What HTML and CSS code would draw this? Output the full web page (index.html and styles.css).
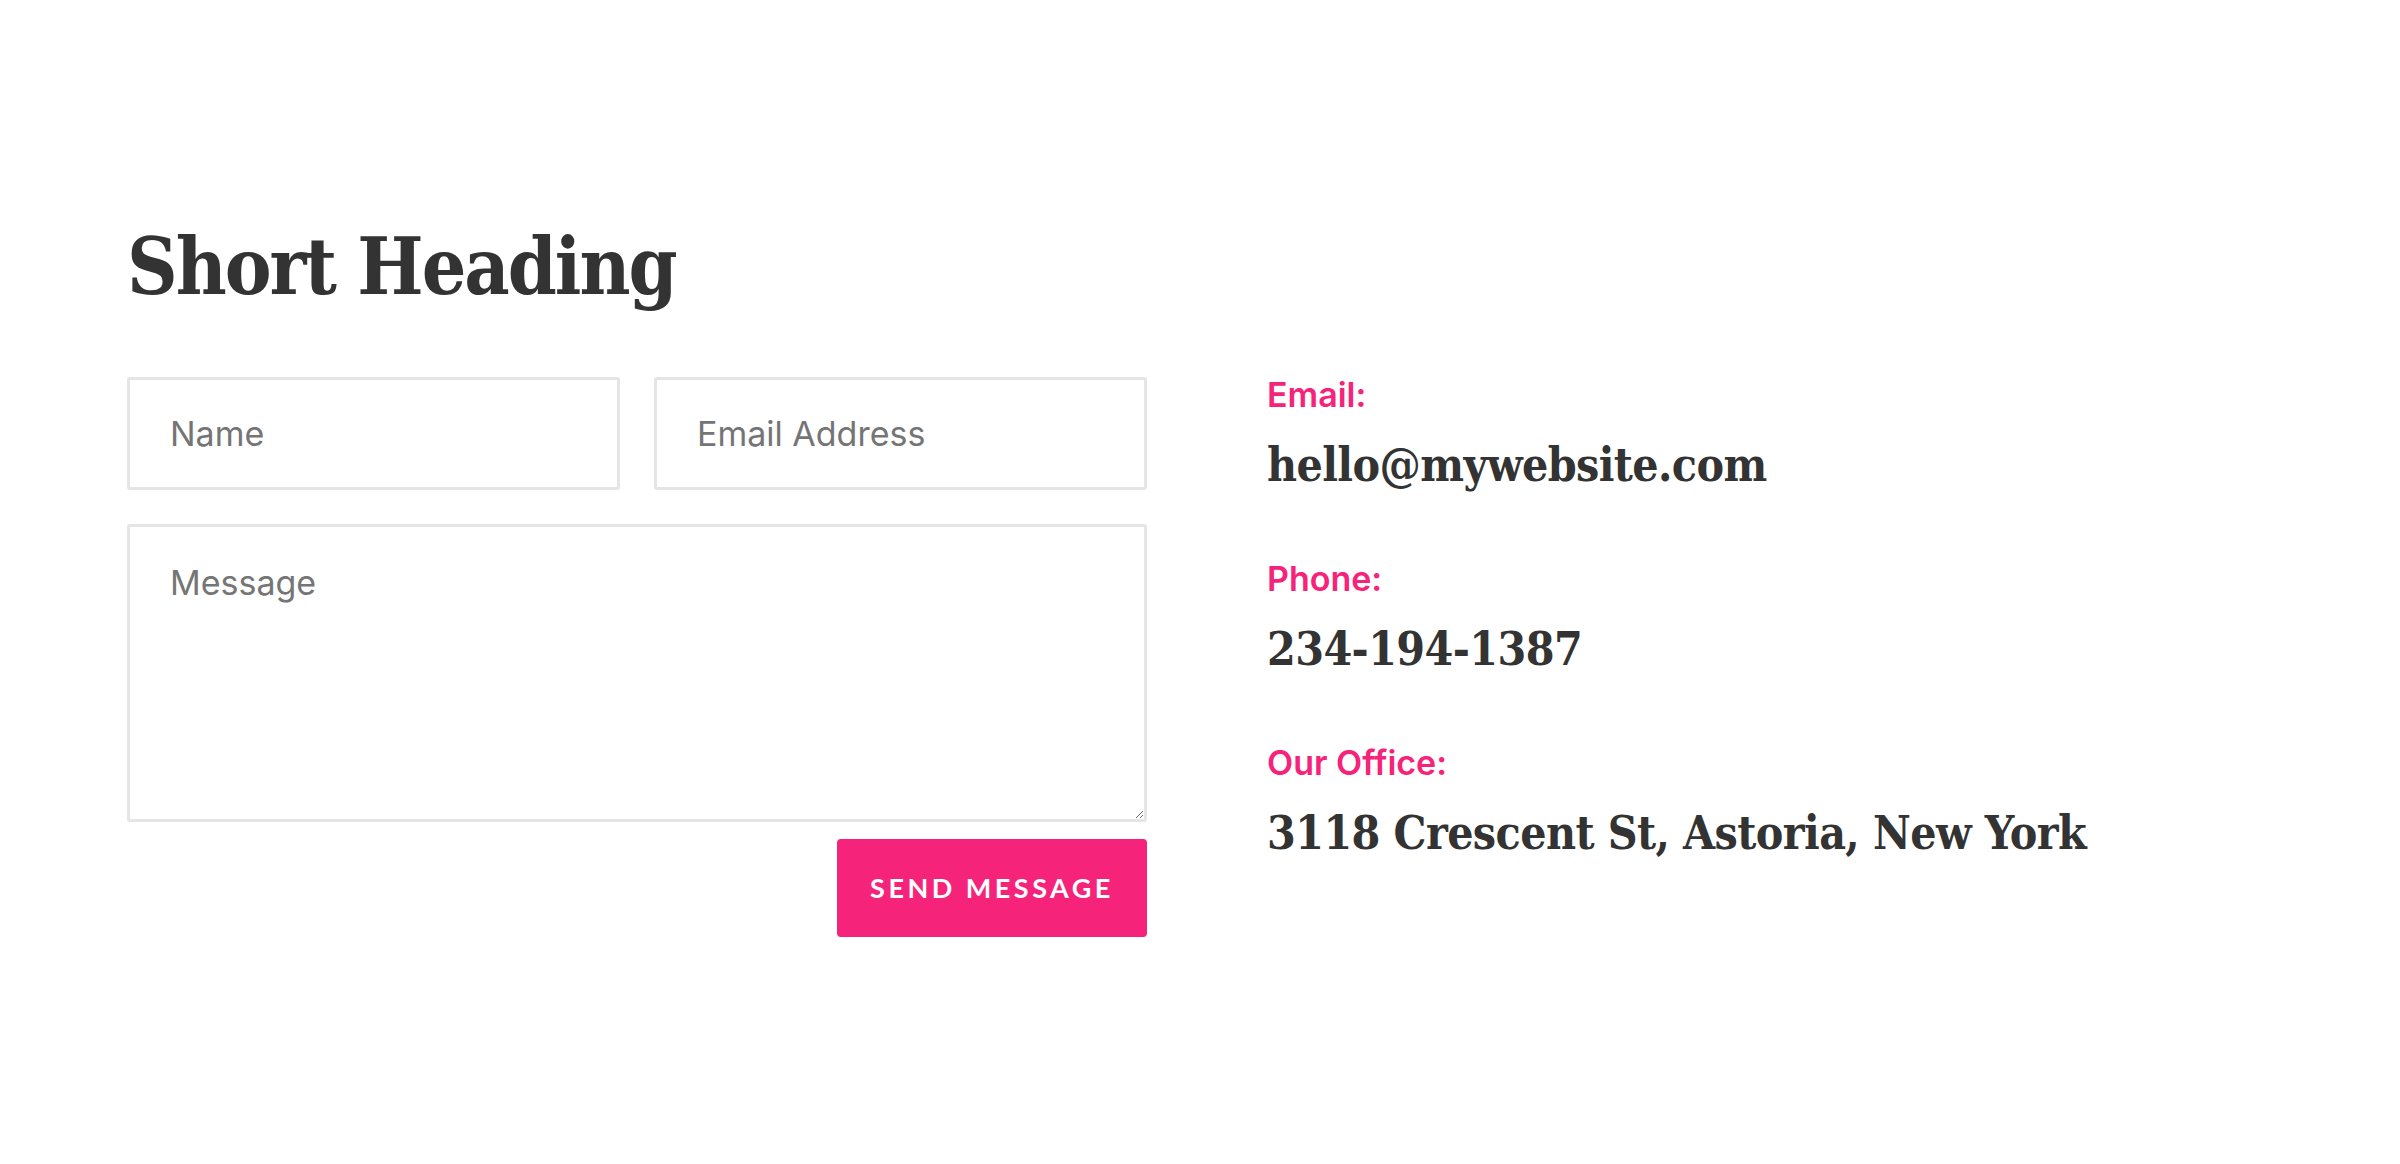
FILE: index.html
```html
<!DOCTYPE html>
<html lang="en">
<head>
<meta charset="utf-8">
<title>Contact</title>
<link rel="stylesheet" href="styles.css">
</head>
<body>
<section class="contact">
  <h2 class="heading">Short Heading</h2>
  <div class="columns">
    <form class="form">
      <div class="row">
        <input class="field" type="text" placeholder="Name">
        <input class="field" type="email" placeholder="Email Address">
      </div>
      <textarea class="field area" placeholder="Message"></textarea>
      <div class="actions">
        <button class="send" type="button">Send Message</button>
      </div>
    </form>
    <div class="info">
      <div class="item">
        <div class="label">Email:</div>
        <div class="value">hello@mywebsite.com</div>
      </div>
      <div class="item">
        <div class="label">Phone:</div>
        <div class="value">234-194-1387</div>
      </div>
      <div class="item">
        <div class="label">Our Office:</div>
        <div class="value">3118 Crescent St, Astoria, New York</div>
      </div>
    </div>
  </div>
</section>
</body>
</html>
```
FILE: styles.css
```css
html, body {
  margin: 0;
  padding: 0;
  background: #ffffff;
}

body {
  font-family: "Inter", "Lato", sans-serif;
  color: #333333;
}

.contact {
  padding: 220px 127px 0 127px;
}

.heading {
  margin: 0 0 63px 0;
  font-family: "DejaVu Serif Condensed", "DejaVu Serif", serif;
  font-stretch: condensed;
  font-weight: 700;
  font-size: 78px;
  line-height: 1.2;
  letter-spacing: -2px;
  color: #333333;
}

.columns {
  display: grid;
  grid-template-columns: 1020px 1fr;
  column-gap: 120px;
}

.form {
  display: flex;
  flex-direction: column;
  gap: 34px;
}

.row {
  display: grid;
  grid-template-columns: 1fr 1fr;
  gap: 34px;
}

.field {
  box-sizing: border-box;
  width: 100%;
  height: 113px;
  margin: 0;
  padding: 0 40px;
  border: 3px solid #e5e5e5;
  border-radius: 3px;
  background: #ffffff;
  font-family: "Inter", "Lato", sans-serif;
  font-size: 34px;
  color: #333333;
  outline: none;
}

.field::placeholder {
  color: #757575;
  opacity: 1;
}

.area {
  height: 298px;
  padding-top: 35px;
  resize: vertical;
  display: block;
}

.actions {
  display: flex;
  justify-content: flex-end;
  margin-top: -17px;
}

.send {
  width: 310px;
  height: 98px;
  border: none;
  border-radius: 4px;
  background: #f5237a;
  color: #ffffff;
  font-family: "Lato", "Inter", sans-serif;
  font-weight: 700;
  font-size: 27px;
  letter-spacing: 3.5px;
  text-transform: uppercase;
  cursor: pointer;
}

.info {
  display: flex;
  flex-direction: column;
  gap: 68px;
}

.label {
  font-family: "Inter", "Lato", sans-serif;
  font-weight: 600;
  font-size: 34px;
  line-height: 36px;
  color: #f5237a;
}

.value {
  margin-top: 24px;
  font-family: "DejaVu Serif Condensed", "DejaVu Serif", serif;
  font-stretch: condensed;
  font-weight: 700;
  font-size: 46px;
  line-height: 56px;
  letter-spacing: -0.6px;
  color: #333333;
}
```
